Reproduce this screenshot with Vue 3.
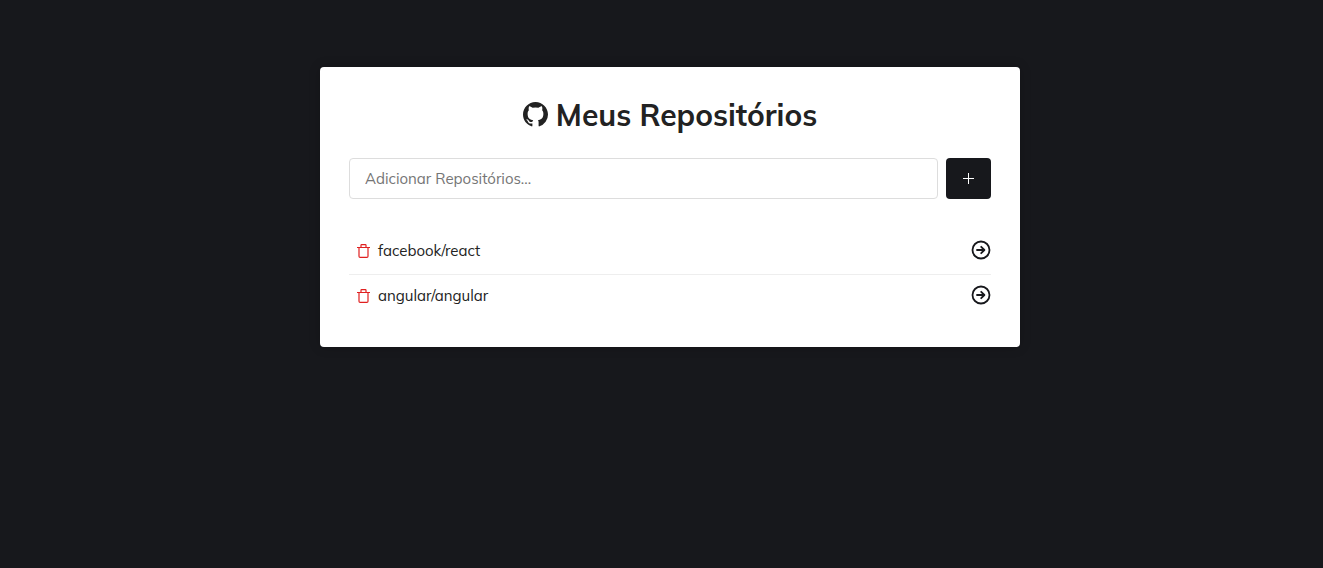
<script setup>
import { ref } from 'vue'

const newRepo = ref('')
const repos = ref(['facebook/react', 'angular/angular'])

function addRepo() {
  const name = newRepo.value.trim()
  if (name && !repos.value.includes(name)) repos.value.push(name)
  newRepo.value = ''
}

function removeRepo(name) {
  repos.value = repos.value.filter((repo) => repo !== name)
}
</script>

<template>
  <div class="page">
    <main class="card">
      <h1 class="title">
        <svg class="github" viewBox="0 0 16 16" aria-hidden="true">
          <path d="M8 0C3.58 0 0 3.58 0 8c0 3.54 2.29 6.53 5.47 7.59.4.07.55-.17.55-.38 0-.19-.01-.82-.01-1.49-2.01.37-2.53-.49-2.69-.94-.09-.23-.48-.94-.82-1.13-.28-.15-.68-.52-.01-.53.63-.01 1.08.58 1.23.82.72 1.21 1.87.87 2.33.66.07-.52.28-.87.51-1.07C4.78 11.31 3 10.6 2.95 7.6c0-.95.25-1.7.8-2.3-.1-.4-.3-1.4.1-2.5 0 0 .8-.1 2.3.9A7 7 0 0 1 8 3.45a7 7 0 0 1 1.85.25c1.5-1 2.3-.9 2.3-.9.4 1.1.2 2.1.1 2.5.55.6.8 1.35.8 2.3-.05 3-1.85 3.71-3.6 3.93.29.25.54.73.54 1.48 0 1.07-.01 1.93-.01 2.2 0 .21.15.46.55.38A8.01 8.01 0 0 0 16 8c0-4.42-3.58-8-8-8z" />
        </svg>
        <span>Meus Repositórios</span>
      </h1>

      <form class="form" @submit.prevent="addRepo">
        <input v-model="newRepo" class="field" type="text" placeholder="Adicionar Repositórios..." aria-label="Adicionar Repositórios" />
        <button class="add" type="submit" aria-label="Adicionar">
          <svg viewBox="0 0 11 11" aria-hidden="true"><path d="M5.5 0v11M0 5.5h11" /></svg>
        </button>
      </form>

      <ul class="list">
        <li v-for="repo in repos" :key="repo" class="row">
          <button class="remove" type="button" :aria-label="'Remover ' + repo" @click="removeRepo(repo)">
            <svg viewBox="0 0 13 14" aria-hidden="true">
              <path d="M.5 3.5h12M4 3.2V1.2q0-.6.6-.6h3.8q.6 0 .6.6v2M2 3.8v8.5q0 1.1 1.1 1.1h6.8q1.1 0 1.1-1.1V3.8" />
            </svg>
          </button>
          <span class="name">{{ repo }}</span>
          <a class="open" :href="'#/repositorio/' + encodeURIComponent(repo)" :aria-label="'Abrir ' + repo">
            <svg viewBox="0 0 20 20" aria-hidden="true">
              <circle cx="10" cy="10" r="8.5" />
              <path d="M6 10h7.2M10.2 6.8l3.2 3.2-3.2 3.2" />
            </svg>
          </a>
        </li>
      </ul>
    </main>
  </div>
</template>

<style>
body {
  background: #17181c;
}
</style>

<style scoped>
.page {
  box-sizing: border-box;
  min-height: 100vh;
  padding: 67px 0 32px 17px;
  background: #17181c;
  color: #222;
  font-family: Muli, Mulish, Lato, sans-serif;
  font-size: 15px;
}

.card {
  box-sizing: border-box;
  max-width: 700px;
  margin: 0 auto;
  padding: 28px 29px;
  border-radius: 4px;
  background: #fff;
  box-shadow: 0 0 12px rgba(0, 0, 0, 0.2);
}

.title {
  display: flex;
  align-items: center;
  justify-content: center;
  gap: 8px;
  margin: 0;
  font-size: 30px;
  line-height: 40px;
  font-weight: 700;
}

.github {
  width: 25px;
  height: 25px;
  margin-bottom: 2px;
  fill: currentColor;
}

.form {
  display: flex;
  gap: 8px;
  margin-top: 23px;
}

.field {
  box-sizing: border-box;
  flex: 1;
  min-width: 0;
  height: 41px;
  padding: 0 15px;
  border: 1px solid #ddd;
  border-radius: 4px;
  background: #fff;
  color: #222;
  font: inherit;
}

.field::placeholder {
  color: #757575;
  opacity: 1;
}

.add {
  display: grid;
  place-items: center;
  width: 45px;
  height: 41px;
  padding: 0;
  border: 0;
  border-radius: 4px;
  background: #17181c;
  cursor: pointer;
}

.add svg {
  width: 11px;
  height: 11px;
  fill: none;
  stroke: #fff;
}

.list {
  margin: 31px 0 0;
  padding: 0;
  list-style: none;
}

.row {
  display: flex;
  align-items: center;
  height: 42px;
  padding-bottom: 2px;
}

.row + .row {
  border-top: 1px solid #eee;
}

.remove {
  display: block;
  padding: 8px;
  border: 0;
  background: transparent;
  cursor: pointer;
}

.remove svg {
  display: block;
  width: 13px;
  height: 14px;
  fill: none;
  stroke: #e02020;
  stroke-width: 1.2;
  stroke-linecap: round;
  stroke-linejoin: round;
}

.name {
  flex: 1;
  line-height: 20px;
}

.open {
  display: block;
  padding-bottom: 2px;
  color: #17181c;
}

.open svg {
  display: block;
  width: 20px;
  height: 20px;
  fill: none;
  stroke: currentColor;
  stroke-width: 1.8;
  stroke-linecap: round;
  stroke-linejoin: round;
}
</style>
